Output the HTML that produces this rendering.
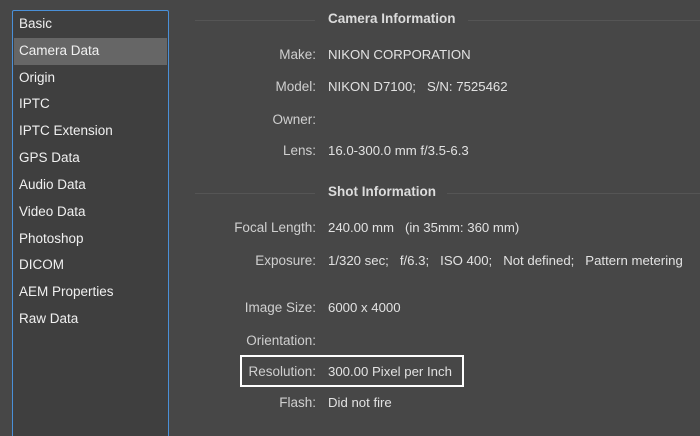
<!DOCTYPE html><html style="height:436px;overflow:hidden"><head><style>
body{margin:0;width:700px;height:436px;background:#474747;font-family:"Liberation Sans",sans-serif;overflow:hidden;position:relative;color:#d6d6d6}
.list{position:absolute;left:12px;top:10px;width:155px;height:426px;border:1px solid #4a90d8;border-bottom:none;border-radius:2px 2px 0 0;background:#3f3f3f}
.it{position:absolute;left:6px;font-size:13.5px;color:#f0f0f0;line-height:26px}
.sel{position:absolute;left:1px;top:27px;width:153px;height:27px;background:#666}
.t{position:absolute;font-size:13.5px;font-weight:bold;color:#dcdcdc}
.ln{position:absolute;height:1px;background:#555}
.l{position:absolute;right:384px;font-size:13.5px;color:#cfcfcf;text-align:right}
.v{position:absolute;left:328px;font-size:13.2px;color:#e2e2e2;white-space:pre}
.box{position:absolute;left:240px;top:355px;width:220px;height:28px;border:2px solid #fff}
</style></head><body>
<div class="list"><div class="sel"></div>
<div class="it" style="top:0">Basic</div>
<div class="it" style="top:27px">Camera Data</div>
<div class="it" style="top:54px">Origin</div>
<div class="it" style="top:80px">IPTC</div>
<div class="it" style="top:107px">IPTC Extension</div>
<div class="it" style="top:134px">GPS Data</div>
<div class="it" style="top:161px">Audio Data</div>
<div class="it" style="top:188px">Video Data</div>
<div class="it" style="top:215px">Photoshop</div>
<div class="it" style="top:241px">DICOM</div>
<div class="it" style="top:268px">AEM Properties</div>
<div class="it" style="top:295px">Raw Data</div>
</div>
<div class="ln" style="left:195px;top:20px;width:120px"></div>
<div class="t" style="left:328px;top:11px">Camera Information</div>
<div class="ln" style="left:468px;top:20px;width:232px"></div>
<div class="ln" style="left:195px;top:193px;width:120px"></div>
<div class="t" style="left:328px;top:184px">Shot Information</div>
<div class="ln" style="left:447px;top:193px;width:253px"></div>
<div class="l" style="top:47px">Make:</div><div class="v" style="top:47px">NIKON CORPORATION</div>
<div class="l" style="top:79px">Model:</div><div class="v" style="top:79px">NIKON D7100;   S/N: 7525462</div>
<div class="l" style="top:112px">Owner:</div>
<div class="l" style="top:143px">Lens:</div><div class="v" style="top:143px">16.0-300.0 mm f/3.5-6.3</div>
<div class="l" style="top:220px">Focal Length:</div><div class="v" style="top:220px">240.00 mm   (in 35mm: 360 mm)</div>
<div class="l" style="top:253px">Exposure:</div><div class="v" style="top:253px">1/320 sec;   f/6.3;   ISO 400;   Not defined;   Pattern metering</div>
<div class="l" style="top:300px">Image Size:</div><div class="v" style="top:300px">6000 x 4000</div>
<div class="l" style="top:333px">Orientation:</div>
<div class="box"></div>
<div class="l" style="top:364px">Resolution:</div><div class="v" style="top:364px">300.00 Pixel per Inch</div>
<div class="l" style="top:395px">Flash:</div><div class="v" style="top:395px">Did not fire</div>
</body></html>
